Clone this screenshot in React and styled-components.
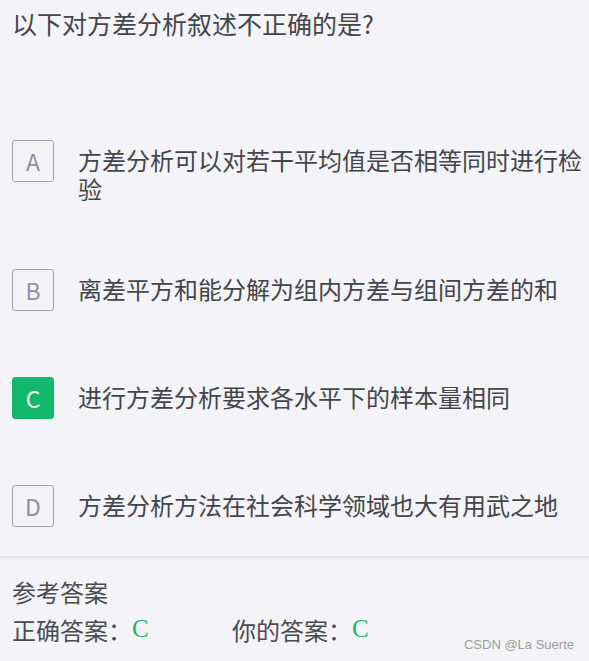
import React from "react";
import styled, { createGlobalStyle } from "styled-components";

const Global = createGlobalStyle`
  html, body { margin: 0; padding: 0; background: #f4f4f8; }
  body { font-family: "Noto Sans CJK SC", "Noto Sans", sans-serif; color: #46474c; }
`;

const Page = styled.div`
  position: relative;
  min-height: 661px;
  background: #f4f4f8;
  box-sizing: border-box;
  padding-top: 5px;
`;

const Title = styled.div`
  padding: 0 12px;
  font-size: 25px;
  line-height: 36px;
  color: #45464b;
`;

const Options = styled.div`
  display: flex;
  flex-direction: column;
  gap: 66px;
  padding: 0 4px 0 12px;
  margin-top: 99px;
`;

const Row = styled.div`
  display: flex;
  align-items: flex-start;
  gap: 24px;
`;

const Letter = styled.div`
  flex: none;
  width: 42px;
  height: 42px;
  box-sizing: border-box;
  border-radius: 3px;
  border: 1px solid ${(p) => (p.$on ? "#12b96c" : "#a2a4ac")};
  background: ${(p) => (p.$on ? "#12b96c" : "transparent")};
  color: ${(p) => (p.$on ? "#ffffff" : "#8e9098")};
  display: flex;
  align-items: center;
  justify-content: center;
  font-size: 23px;
  font-weight: 400;
  line-height: 1;
`;

const OptText = styled.div`
  margin-top: 5px;
  font-size: 24px;
  line-height: 29px;
  color: #44454a;
`;

const Divider = styled.div`
  margin-top: 29px;
  height: 2px;
  background: #e3e3ec;
`;

const Answer = styled.div`
  padding: 0 12px;
  margin-top: 15px;
`;

const Label = styled.div`
  font-size: 24px;
  line-height: 38px;
  color: #4a4b50;
`;

const AnswerLine = styled.div`
  display: flex;
  align-items: baseline;
  font-size: 24px;
  line-height: 38px;
  color: #4a4b50;
`;

const Item = styled.span`
  min-width: ${(p) => p.$w || "auto"};
  display: inline-flex;
  align-items: baseline;
`;

const Mark = styled.span`
  font-family: "Liberation Serif", "Times New Roman", serif;
  color: #10b96c;
  font-size: 25px;
  position: relative;
  top: -3px;
`;

const Watermark = styled.div`
  position: absolute;
  right: 15px;
  bottom: 9px;
  font-family: "Liberation Sans", Arial, sans-serif;
  font-size: 13px;
  color: #9d9d9d;
`;

const options = [
  { k: "A", t: "方差分析可以对若干平均值是否相等同时进行检验" },
  { k: "B", t: "离差平方和能分解为组内方差与组间方差的和" },
  { k: "C", t: "进行方差分析要求各水平下的样本量相同", on: true },
  { k: "D", t: "方差分析方法在社会科学领域也大有用武之地" },
];

export default function App() {
  return (
    <Page>
      <Global />
      <Title>以下对方差分析叙述不正确的是?</Title>
      <Options>
        {options.map((o) => (
          <Row key={o.k}>
            <Letter $on={o.on}>{o.k}</Letter>
            <OptText>{o.t}</OptText>
          </Row>
        ))}
      </Options>
      <Divider />
      <Answer>
        <Label>参考答案</Label>
        <AnswerLine>
          <Item $w="220px">
            正确答案：<Mark>C</Mark>
          </Item>
          <Item>
            你的答案：<Mark>C</Mark>
          </Item>
        </AnswerLine>
      </Answer>
      <Watermark>CSDN @La Suerte</Watermark>
    </Page>
  );
}
